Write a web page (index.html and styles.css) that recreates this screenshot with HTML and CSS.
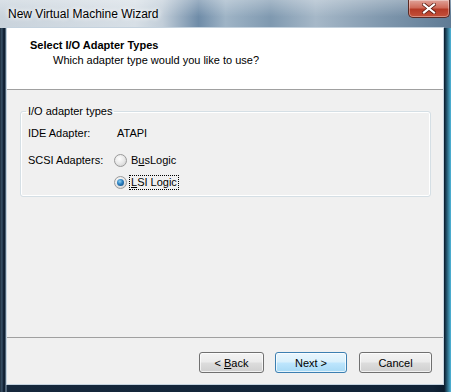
FILE: index.html
```html
<!DOCTYPE html>
<html lang="en">
<head>
    <meta charset="UTF-8">
    <title>New Virtual Machine Wizard</title>
    <link rel="stylesheet" href="styles.css">
</head>
<body>
    <div class="window">
        <div class="titlebar">
            <span class="caption">New Virtual Machine Wizard</span>
            <span class="close">
                <svg width="14" height="11" viewBox="0 0 14 11">
                    <path d="M2 1.5 L12 9.5 M12 1.5 L2 9.5" stroke="#5a1a10" stroke-width="3.6" stroke-linecap="square"/>
                    <path d="M2 1.5 L12 9.5 M12 1.5 L2 9.5" stroke="#fff" stroke-width="2.2" stroke-linecap="square"/>
                </svg>
            </span>
        </div>
        <div class="client">
            <div class="header">
                <div class="head-title">Select I/O Adapter Types</div>
                <div class="head-sub">Which adapter type would you like to use?</div>
            </div>
            <div class="body">
                <fieldset class="group">
                    <legend>I/O adapter types</legend>
                    <div class="row">
                        <span class="label">IDE Adapter:</span>
                        <span class="value">ATAPI</span>
                    </div>
                    <div class="row row-scsi">
                        <span class="label">SCSI Adapters:</span>
                        <div class="radios">
                            <div class="radio">
                                <span class="dot"></span>
                                <span class="text">B<u>u</u>sLogic</span>
                            </div>
                            <div class="radio checked">
                                <span class="dot"></span>
                                <span class="text focus"><u>L</u>SI Logic</span>
                            </div>
                        </div>
                    </div>
                </fieldset>
            </div>
            <div class="footer">
                <span class="btn btn-back"><span>&lt; <u>B</u>ack</span></span>
                <span class="btn btn-next"><span>Next &gt;</span></span>
                <span class="btn btn-cancel"><span>Cancel</span></span>
            </div>
        </div>
    </div>
</body>
</html>
```
FILE: styles.css
```css
body, div, span, fieldset, legend{
    margin:0;
    padding:0;
}
body{
    width:451px;
    height:392px;
    overflow:hidden;
    font-family:"Liberation Sans", Arial, sans-serif;
    font-size:11px;
    color:#000;
}
.window{
    width:451px;
    height:392px;
    box-sizing:border-box;
    padding:0 8px 8px 7px;
    display:flex;
    flex-direction:column;
    background:linear-gradient(to right, #1c2c3c 0px, #3c556c 2px, #16263a 3px, #0d1e30 5px, #8fa6ba 6px, #16283c 7px, #112337 96%, #0b1c2e 98.5%, #4fb6da 100%);
}
.titlebar{
    height:28px;
    margin:0 -8px 0 -7px;
    padding:0 7px 0 8px;
    display:flex;
    align-items:flex-start;
    justify-content:space-between;
    background:
        linear-gradient(to bottom, rgba(255,255,255,.3) 0%, rgba(255,255,255,0) 60%),
        linear-gradient(to right, #c9d3dc 0%, #d7dfe6 30%, #c2ced9 36%, #6f8ca8 44%, #9fb4c6 50%, #7f99b0 60%, #a6b8c8 70%, #7f97ad 85%, #5f7b95 100%);
}
.caption{
    font-size:12px;
    line-height:14px;
    margin-top:7px;
    text-shadow:0 0 4px #fff, 0 0 6px #fff;
}
.close{
    width:42px;
    height:18px;
    margin-right:-6px;
    box-sizing:border-box;
    border:1px solid #5a2a24;
    border-top:none;
    border-radius:0 0 5px 5px;
    display:flex;
    align-items:center;
    justify-content:center;
    background:linear-gradient(to bottom, #e0a399 0%, #cf6b5a 45%, #b53a26 55%, #c4513a 100%);
    box-shadow:inset 0 0 0 1px rgba(255,255,255,.35);
}
.client{
    flex:1;
    display:flex;
    flex-direction:column;
    background:#f0f0f0;
    box-shadow:0 0 0 1px #c4d2de;
}
.header{
    height:51px;
    background:#fff;
    border-bottom:1px solid #a0a0a0;
    padding:10px 0 0 23px;
}
.head-title{
    font-weight:bold;
    line-height:14px;
}
.head-sub{
    line-height:14px;
    margin:1px 0 0 23px;
}
.body{
    flex:1;
}
.group{
    margin:14px 12px 0 13px;
    padding:0 8px 6px 7px;
    border:1px solid #d5dfe5;
    border-radius:3px;
    box-shadow:inset 0 0 0 1px #fff;
}
.group legend{
    line-height:14px;
    padding:0 2px;
    margin-left:-2px;
}
.row{
    display:flex;
    line-height:15px;
    margin-top:8px;
}
.row-scsi{
    margin-top:12px;
}
.label{
    width:86px;
}
.value{
    padding-left:3px;
}
.radios{
    display:flex;
    flex-direction:column;
    gap:7px;
}
.radio{
    display:flex;
    align-items:center;
}
.dot{
    width:13px;
    height:13px;
    box-sizing:border-box;
    border-radius:50%;
    border:1px solid #9a9a9a;
    margin-right:2px;
    background:radial-gradient(circle at 40% 35%, #fdfdfd 0%, #e8e8e8 50%, #c8c8c8 100%);
    display:flex;
    align-items:center;
    justify-content:center;
}
.radio.checked .dot::after{
    content:"";
    width:7px;
    height:7px;
    border-radius:50%;
    background:radial-gradient(circle at 40% 35%, #8fd0f2 0%, #2a7fbf 45%, #0c3f73 100%);
}
.text{
    padding:0 1px;
    border:1px dotted transparent;
    line-height:13px;
}
.text.focus{
    border-color:#000;
}
.footer{
    height:47px;
    box-sizing:border-box;
    border-top:1px solid #a0a0a0;
    display:flex;
    align-items:flex-start;
    justify-content:flex-end;
    padding:14px 11px 0 0;
}
.btn{
    height:21px;
    box-sizing:border-box;
    border:1px solid #707070;
    border-radius:3px;
    display:flex;
    align-items:center;
    justify-content:center;
    background:linear-gradient(to bottom, #f3f3f3 0%, #ebebeb 48%, #dddddd 52%, #cfcfcf 100%);
    box-shadow:inset 0 0 0 1px rgba(255,255,255,.7);
}
.btn-back{
    width:65px;
}
.btn-next{
    width:72px;
    margin-left:11px;
    border-color:#3c7fb1;
    background:linear-gradient(to bottom, #eaf6fd 0%, #d9f0fc 48%, #bee6fd 52%, #a7d9f5 100%);
}
.btn-cancel{
    width:73px;
    margin-left:12px;
}
```
